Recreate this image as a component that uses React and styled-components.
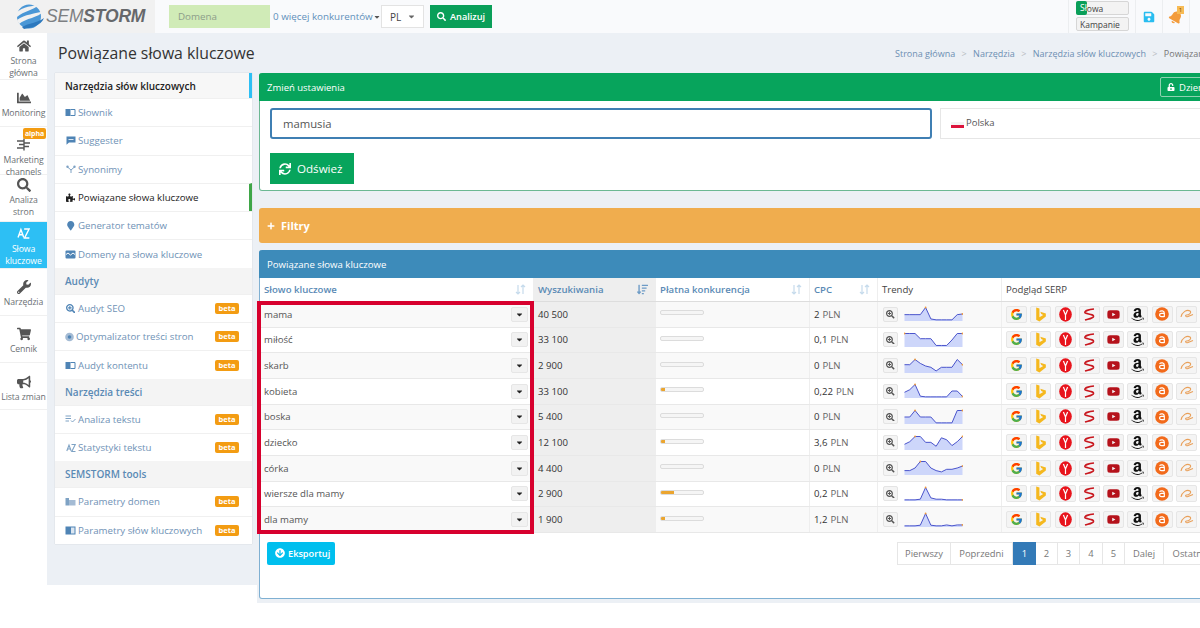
import React from "react";
import styled, { createGlobalStyle } from "styled-components";
import {
  FaHome, FaChartArea, FaSearch, FaWrench, FaShoppingCart, FaBullhorn,
  FaPuzzlePiece, FaSearchPlus, FaSave, FaBell, FaSync, FaUnlockAlt, FaPlus, FaCaretDown,
  FaArrowCircleDown, FaSortAmountDown, FaYoutube, FaAmazon, FaMapMarker,
} from "react-icons/fa";
import { FcGoogle } from "react-icons/fc";

const GlobalStyle = createGlobalStyle`
  html, body { margin: 0; padding: 0; background: #fff; overflow: hidden; }
  body { font-family: "Open Sans", "Liberation Sans", sans-serif; font-size: 10px; color: #444; }
  * { box-sizing: border-box; }
`;

// small drawn icons, the icon packs have nothing close to these
const BookIcon = () => (
  <svg width="11" height="9" viewBox="0 0 11 9">
    <path d="M0.5 1 H5.5 V8 H0.5Z" fill="#4f84b5" />
    <path d="M5.5 1.5 H10 V7.5 H5.5" fill="none" stroke="#4f84b5" strokeWidth="1" />
  </svg>
);

const BubbleIcon = () => (
  <svg width="10" height="9" viewBox="0 0 10 9">
    <path d="M0.5 0.5 H9.5 V6.5 H3 L0.5 8.8Z" fill="#4f84b5" />
    <path d="M2.5 3.5 H7.5" stroke="#fff" strokeWidth="0.8" />
  </svg>
);

const BranchIcon = () => (
  <svg width="10" height="9" viewBox="0 0 10 9">
    <path d="M1.5 2 L5 5 L8.5 2 M5 5 V8" fill="none" stroke="#7ea2c4" strokeWidth="1" />
    <circle cx="1.5" cy="1.8" r="1.2" fill="#7ea2c4" />
    <circle cx="8.5" cy="1.8" r="1.2" fill="#7ea2c4" />
  </svg>
);

const WaveBoxIcon = () => (
  <svg width="11" height="9" viewBox="0 0 11 9">
    <rect x="0.5" y="0.5" width="10" height="8" rx="1" fill="#4f84b5" />
    <path d="M1 4.5 L3 3 L5.5 5 L8 3 L10 4.5" fill="none" stroke="#fff" strokeWidth="1" />
  </svg>
);

const TargetIcon = () => (
  <svg width="10" height="10" viewBox="0 0 10 10">
    <circle cx="5" cy="5" r="4.8" fill="#a4bbd4" />
    <circle cx="5" cy="5" r="2" fill="#4f84b5" />
  </svg>
);

const TextCheckIcon = () => (
  <svg width="11" height="8" viewBox="0 0 11 8">
    <path d="M0.5 1 H6 M0.5 3.5 H6 M0.5 6 H4" stroke="#7ea2c4" strokeWidth="1" />
    <path d="M6 5.5 L7.5 7 L10.5 4" fill="none" stroke="#7ea2c4" strokeWidth="1" />
  </svg>
);

const AzIcon = ({ size = 10, color = "#7ea2c4" }) => (
  <svg width={size} height={size} viewBox="0 0 10 10">
    <path d="M0.8 8 L3 2 L5.2 8 M1.6 6 H4.4" fill="none" stroke={color} strokeWidth="1.1" />
    <path d="M5.5 1.5 H9.3 L5.8 8.5 H9.5" fill="none" stroke={color} strokeWidth="1.1" />
  </svg>
);

const ParamIcon = () => (
  <svg width="11" height="9" viewBox="0 0 11 9">
    <path d="M0.5 1 H4 V8.5 H0.5Z" fill="#7ea2c4" />
    <path d="M4 3 H10.5 V8.5 H4Z" fill="#a4bbd4" />
  </svg>
);

const PanelIcon = () => (
  <svg width="11" height="9" viewBox="0 0 11 9">
    <rect x="0.5" y="0.5" width="10" height="8" fill="#4f84b5" />
    <rect x="6" y="1.5" width="3.5" height="6" fill="#dbe6f1" />
  </svg>
);

const ChannelsIcon = () => (
  <svg width="15" height="13" viewBox="0 0 15 13">
    <path d="M8 0.5 V12.5" stroke="#555" strokeWidth="1.4" />
    <path d="M1 3 H8 M3 6.5 H8 M1 10 H8 M8 5 H14 M8 8.5 H13" stroke="#555" strokeWidth="1.3" />
  </svg>
);

const sideItems = [
  { icon: <FaHome />, label: ["Strona", "główna"], h: 47, pad: 6 },
  { icon: <FaChartArea />, label: ["Monitoring"], h: 47, pad: 11 },
  { icon: <ChannelsIcon />, label: ["Marketing", "channels"], h: 48, pad: 11, alpha: true },
  { icon: <FaSearch />, label: ["Analiza", "stron"], h: 47, pad: 3 },
  { icon: <AzIcon size={13} color="#fff" />, label: ["Słowa", "kluczowe"], h: 47, pad: 5, active: true },
  { icon: <FaWrench />, label: ["Narzędzia"], h: 47, pad: 11 },
  { icon: <FaShoppingCart />, label: ["Cennik"], h: 47, pad: 11 },
  { icon: <FaBullhorn />, label: ["Lista zmian"], h: 47, pad: 12 },
];

const menu = [
  { head: "Narzędzia słów kluczowych", first: true },
  { icon: <BookIcon />, label: "Słownik" },
  { icon: <BubbleIcon />, label: "Suggester" },
  { icon: <BranchIcon />, label: "Synonimy" },
  { icon: <FaPuzzlePiece />, label: "Powiązane słowa kluczowe", current: true },
  { icon: <FaMapMarker />, label: "Generator tematów", blue: true },
  { icon: <WaveBoxIcon />, label: "Domeny na słowa kluczowe" },
  { head: "Audyty" },
  { icon: <FaSearchPlus />, label: "Audyt SEO", beta: true, blue: true },
  { icon: <TargetIcon />, label: "Optymalizator treści stron", beta: true, tight: true },
  { icon: <BookIcon />, label: "Audyt kontentu", beta: true },
  { head: "Narzędzia treści" },
  { icon: <TextCheckIcon />, label: "Analiza tekstu", beta: true },
  { icon: <AzIcon />, label: "Statystyki tekstu", beta: true },
  { head: "SEMSTORM tools" },
  { icon: <ParamIcon />, label: "Parametry domen", beta: true },
  { icon: <PanelIcon />, label: "Parametry słów kluczowych", beta: true },
];

const rows = [
  { word: "mama", vol: "40 500", paid: 0, cpc: "2", trend: [.45, .45, .45, .45, 1, .12, .05, .05, .05, .05, .45, .5] },
  { word: "miłość", vol: "33 100", paid: 0, cpc: "0,1", trend: [1, 1, 1, .6, .6, .6, .08, .08, .08, .5, 1, 1] },
  { word: "skarb", vol: "2 900", paid: 0, cpc: "0", trend: [.6, .6, 1, .7, .5, .4, .12, .4, .4, .4, 1, .6] },
  { word: "kobieta", vol: "33 100", paid: 10, cpc: "0,22", trend: [.4, .6, 1, .1, .05, .05, .05, .05, .05, .5, .5, .08] },
  { word: "boska", vol: "5 400", paid: 0, cpc: "0", trend: [.5, .5, 1, .5, .5, .5, .05, .05, .05, .05, 1, 1] },
  { word: "dziecko", vol: "12 100", paid: 10, cpc: "3,6", trend: [.4, .6, 1, 1, .55, .55, .25, .9, .75, .3, .6, 1] },
  { word: "córka", vol: "4 400", paid: 0, cpc: "0", trend: [.3, .3, .5, 1, 1, .5, .3, .2, .4, .4, .5, .65] },
  { word: "wiersze dla mamy", vol: "2 900", paid: 31, cpc: "0,2", trend: [.05, .05, .05, .1, 1, .2, .1, .1, .05, .05, .05, .05] },
  { word: "dla mamy", vol: "1 900", paid: 10, cpc: "1,2", trend: [.05, .05, .05, .1, 1, .1, .05, .05, .12, .05, .12, .12] },
];

const pages = [
  { t: "Pierwszy", w: 54 }, { t: "Poprzedni", w: 62 }, { t: "1", w: 23, on: true }, { t: "2", w: 22 },
  { t: "3", w: 22 }, { t: "4", w: 23 }, { t: "5", w: 22 }, { t: "Dalej", w: 39 }, { t: "Ostatni", w: 50 },
];

const Globe = () => (
  <svg width="30" height="27" viewBox="0 0 30 27">
    <circle cx="14" cy="13.5" r="12" fill="#4a97d6" />
    <path d="M1 10 C8 3 18 3 24 2 C18 7 9 8 2 14Z" fill="#f1f1f1" />
    <path d="M2 17 C10 11 20 11 29 8 C23 15 11 15 4 21Z" fill="#f1f1f1" />
    <path d="M7 24 C14 20 22 20 29 15 C26 23 15 25 9 26Z" fill="#2c78bd" />
  </svg>
);

const Bing = () => (
  <svg width="13" height="15" viewBox="0 0 12 14">
    <path d="M2 0.5 L5 1.5 V9.5 L8.5 7.5 L6.7 6.5 L5.8 4.4 L11 6 V8.8 L5 13.5 L2 11.8Z" fill="#f5b81e" />
  </svg>
);

const Yandex = () => (
  <svg width="13" height="15" viewBox="0 0 13 15">
    <ellipse cx="6.5" cy="7.5" rx="6.3" ry="7.2" fill="#e8141c" />
    <path d="M4.4 3 L6.5 8 L8.6 3 M6.5 8 V13" fill="none" stroke="#fff" strokeWidth="1.2" />
  </svg>
);

const Seznam = () => (
  <svg width="14" height="13" viewBox="0 0 14 13">
    <path d="M12 1 C7 1.5 2 3 3 4.8 C4 6.2 12 6 11.5 8.5 C11 10.5 6 11 3 12" fill="none" stroke="#c8171e" strokeWidth="1.7" />
  </svg>
);

const Allegro = () => (
  <svg width="14" height="14" viewBox="0 0 14 14">
    <circle cx="7" cy="7" r="6.8" fill="#f26a1b" />
    <path d="M4.5 4.6 C6 3.4 9.3 3.6 9.3 6 V10 M9.3 6.4 H6.5 C3.9 6.4 3.9 9.7 6.5 9.7 H9.3" fill="none" stroke="#fff" strokeWidth="1.2" />
  </svg>
);

const Ali = () => (
  <svg width="14" height="10" viewBox="0 0 14 10">
    <path d="M1 8 C2 3 7 0 10 2 C12 3.5 9 6 6.5 6 C5 6 5.5 8.5 8 7.5 L13 5.5" fill="none" stroke="#e9a05a" strokeWidth="1.1" />
  </svg>
);

const SortArrows = () => (
  <svg width="11" height="11" viewBox="0 0 11 11">
    <path d="M3 1 V10 M1 8 L3 10 L5 8 M8 10 V1 M6 3 L8 1 L10 3" fill="none" stroke="currentColor" strokeWidth="1.2" />
  </svg>
);

const Spark = ({ data }) => {
  const pts = data.map((v, i) => [(i / (data.length - 1)) * 58 + 0.5, 14.5 - v * 13]);
  const line = pts.map(p => p.join(",")).join(" ");
  const last = pts[pts.length - 1];
  const peak = pts.reduce((a, b) => (b[1] < a[1] ? b : a));
  return (
    <svg width="59" height="16" viewBox="0 0 59 16">
      <polygon points={`0.5,15 ${line} 58.5,15`} fill="#cdd6fa" />
      <polyline points={line} fill="none" stroke="#4a54cc" strokeWidth="1" />
      <circle cx={peak[0]} cy={peak[1]} r="0.9" fill="#ef9a3c" />
      <circle cx={last[0]} cy={last[1]} r="0.9" fill="#ef9a3c" />
    </svg>
  );
};

export default function App() {
  return (
    <Page>
      <GlobalStyle />
      <TopBar>
        <LogoBox>
          <Globe />
          <LogoText><span>SEM</span><b>STORM</b></LogoText>
        </LogoBox>
        <DomainInput>Domena</DomainInput>
        <CompLink>0 więcej konkurentów<FaCaretDown /></CompLink>
        <LangSelect>PL<FaCaretDown /></LangSelect>
        <AnalyzeBtn><FaSearch />Analizuj</AnalyzeBtn>
        <TopRight>
          <ToggleBox>
            <Toggle><ToggleOn>Sł</ToggleOn>owa</Toggle>
            <Toggle>Kampanie</Toggle>
          </ToggleBox>
          <TopIcon $color="#29bdf0"><FaSave /></TopIcon>
          <TopIcon $color="#f39c3c">
            <TiltBell><FaBell /></TiltBell>
            <BellBadge>1</BellBadge>
          </TopIcon>
        </TopRight>
      </TopBar>

      <Body>
        <Sidebar>
          {sideItems.map(s => (
            <SideItem key={s.label[0]} $active={s.active} $h={s.h} $pad={s.pad}>
              <SideIcon $active={s.active}>{s.icon}</SideIcon>
              {s.label.map(l => <div key={l}>{l}</div>)}
              {s.alpha && <AlphaBadge>alpha</AlphaBadge>}
            </SideItem>
          ))}
        </Sidebar>

        <Main>
          <TitleRow>
            <Title>Powiązane słowa kluczowe</Title>
            <Crumbs>
              <a>Strona główna</a><i>&gt;</i>
              <a>Narzędzia</a><i>&gt;</i>
              <a>Narzędzia słów kluczowych</a><i>&gt;</i>
              <span>Powiązane słowa kluczowe</span>
            </Crumbs>
          </TitleRow>

          <Columns>
            <LeftCol>
              <Menu>
                {menu.map(m => m.head ? (
                  <MenuHead key={m.head} $first={m.first}>{m.head}</MenuHead>
                ) : (
                  <MenuItem key={m.label} $current={m.current}>
                    <MenuIcon $tight={m.tight} $blue={m.blue}>{m.icon}</MenuIcon>
                    <MenuLabel>{m.label}</MenuLabel>
                    {m.beta && <Beta>beta</Beta>}
                  </MenuItem>
                ))}
              </Menu>
            </LeftCol>

            <RightCol>
              <SettingsPanel>
                <GreenHead>
                  Zmień ustawienia
                  <DayBtn><FaUnlockAlt />Dzienne</DayBtn>
                </GreenHead>
                <SettingsBody>
                  <FieldRow>
                    <KeywordInput>mamusia</KeywordInput>
                    <CountryBox><Flag />Polska</CountryBox>
                  </FieldRow>
                  <RefreshBtn><FaSync />Odśwież</RefreshBtn>
                </SettingsBody>
              </SettingsPanel>

              <FilterBar><FaPlus />Filtry</FilterBar>

              <TablePanel>
                <BlueHead>Powiązane słowa kluczowe</BlueHead>
                <TableWrap>
                  <HeadRow>
                    <HeadCell $link>Słowo kluczowe<SortIcon><SortArrows /></SortIcon></HeadCell>
                    <HeadCell $link $sorted>Wyszukiwania<SortIcon $on><FaSortAmountDown /></SortIcon></HeadCell>
                    <HeadCell $link>Płatna konkurencja<SortIcon><SortArrows /></SortIcon></HeadCell>
                    <HeadCell $link>CPC<SortIcon><SortArrows /></SortIcon></HeadCell>
                    <HeadCell>Trendy</HeadCell>
                    <HeadCell>Podgląd SERP</HeadCell>
                  </HeadRow>
                  {rows.map((r, i) => (
                    <Row key={r.word} $odd={i % 2 === 0}>
                      <Cell>
                        <Word>{r.word}</Word>
                        <CaretBtn><FaCaretDown /></CaretBtn>
                      </Cell>
                      <Cell $sorted><Volume>{r.vol}</Volume></Cell>
                      <Cell><Bar><BarFill style={{ width: r.paid + "%" }} /></Bar></Cell>
                      <Cell><Volume>{r.cpc}</Volume><Unit>PLN</Unit></Cell>
                      <Cell>
                        <ZoomBtn><FaSearchPlus /></ZoomBtn>
                        <Spark data={r.trend} />
                      </Cell>
                      <Cell>
                        <SerpList>
                          <SerpBtn><FcGoogle /></SerpBtn>
                          <SerpBtn><Bing /></SerpBtn>
                          <SerpBtn><Yandex /></SerpBtn>
                          <SerpBtn><Seznam /></SerpBtn>
                          <SerpBtn $color="#b5121b"><FaYoutube /></SerpBtn>
                          <SerpBtn $color="#111" $big><FaAmazon /></SerpBtn>
                          <SerpBtn><Allegro /></SerpBtn>
                          <SerpBtn><Ali /></SerpBtn>
                        </SerpList>
                      </Cell>
                    </Row>
                  ))}
                  <Highlight />
                </TableWrap>
                <TableFoot>
                  <ExportBtn><FaArrowCircleDown />Eksportuj</ExportBtn>
                  <Pager>
                    {pages.map(p => <PageCell key={p.t} $on={p.on} $w={p.w}>{p.t}</PageCell>)}
                  </Pager>
                </TableFoot>
              </TablePanel>
            </RightCol>
          </Columns>
        </Main>
      </Body>
    </Page>
  );
}

const Page = styled.div`
  width: 1200px;
  height: 628px;
  overflow: hidden;
`;

const TopBar = styled.div`
  display: flex;
  align-items: center;
  height: 33px;
  background: #f9fafc;
`;

const LogoBox = styled.div`
  display: flex;
  align-items: center;
  gap: 1px;
  width: 155px;
  height: 33px;
  padding-left: 15px;
  background: #f1f1f1;
  margin-right: 14px;
`;

const LogoText = styled.div`
  font-family: "Liberation Sans", sans-serif;
  font-style: italic;
  font-size: 17.5px;
  color: #7d7f82;
  letter-spacing: -0.2px;
  b { color: #66686b; }
`;

const DomainInput = styled.div`
  width: 101px;
  height: 23px;
  line-height: 23px;
  padding-left: 9px;
  background: #d0ebb7;
  color: #8d9d8a;
  font-size: 9.8px;
`;

const CompLink = styled.div`
  display: flex;
  align-items: center;
  margin-left: 3px;
  width: 108px;
  color: #5f90bb;
  font-size: 9.8px;
  white-space: nowrap;
  svg { font-size: 8px; color: #555; }
`;

const LangSelect = styled.div`
  display: flex;
  align-items: center;
  justify-content: space-between;
  width: 43px;
  height: 23px;
  padding: 0 7px 0 8px;
  background: #fff;
  border: 1px solid #e3e3e3;
  font-size: 10px;
  svg { font-size: 9px; color: #666; }
`;

const AnalyzeBtn = styled.div`
  display: flex;
  align-items: center;
  gap: 4px;
  margin-left: 6px;
  width: 62px;
  height: 23px;
  padding-left: 7px;
  background: #0a9f59;
  color: #fff;
  font-size: 9.2px;
  font-weight: 600;
  svg { font-size: 9px; }
`;

const TopRight = styled.div`
  display: flex;
  align-items: stretch;
  height: 33px;
  margin-left: auto;
  padding-right: 10px;
`;

const ToggleBox = styled.div`
  display: flex;
  flex-direction: column;
  gap: 2px;
  width: 68px;
  padding: 1px 0 0 7px;
  border-left: 1px solid #eceef0;
  border-right: 1px solid #eceef0;
`;

const Toggle = styled.div`
  display: flex;
  align-items: center;
  width: 53px;
  height: 14px;
  padding-left: 3px;
  background: #f3f3f3;
  border: 1px solid #d6d6d6;
  border-radius: 2px;
  font-size: 8.5px;
  color: #444;
`;

const ToggleOn = styled.span`
  height: 14px;
  margin: 0 0 0 -4px;
  padding-left: 4px;
  line-height: 14px;
  background: #0a9f59;
  color: #fff;
  border-radius: 2px;
`;

const TopIcon = styled.div`
  position: relative;
  display: flex;
  align-items: center;
  justify-content: center;
  width: 27px;
  border-right: 1px solid #eceef0;
  color: ${p => p.$color};
  font-size: 12px;
`;

const TiltBell = styled.span`
  display: flex;
  font-size: 14px;
  transform: rotate(30deg);
`;

const BellBadge = styled.span`
  position: absolute;
  top: 6px;
  right: 5px;
  width: 7px;
  height: 8px;
  background: #f7bb55;
  color: #7a4a00;
  font-size: 6px;
  line-height: 8px;
  text-align: center;
`;

const Body = styled.div`
  display: flex;
  align-items: flex-start;
  height: 595px;
`;

const Sidebar = styled.div`
  flex: 0 0 47px;
  background: #fff;
`;

const SideItem = styled.div`
  position: relative;
  height: ${p => p.$h}px;
  padding-top: ${p => p.$pad}px;
  text-align: center;
  font-size: 8.7px;
  line-height: 12px;
  white-space: nowrap;
  letter-spacing: -0.1px;
  color: ${p => (p.$active ? "#fff" : "#6b6f74")};
  background: ${p => (p.$active ? "#2dbff4" : "#fff")};
  border-bottom: 1px solid #f0f0f0;
`;

const SideIcon = styled.div`
  display: flex;
  justify-content: center;
  height: 16px;
  font-size: 14px;
  color: ${p => (p.$active ? "#fff" : "#555")};
`;

const AlphaBadge = styled.span`
  position: absolute;
  top: 1px;
  right: 1px;
  width: 23px;
  height: 11px;
  border-radius: 2px;
  background: #f39c12;
  color: #fff;
  font-size: 7px;
  font-weight: 700;
  line-height: 11px;
`;

const Main = styled.div`
  flex: 1;
  min-width: 0;
  overflow: hidden;
`;

const TitleRow = styled.div`
  display: flex;
  align-items: center;
  height: 40px;
  background: #ecf0f5;
  white-space: nowrap;
`;

const Title = styled.h1`
  flex: 0 0 848px;
  margin: 0;
  padding: 0 0 1px 11px;
  font-size: 15.8px;
  font-weight: 400;
  color: #333;
`;

const Crumbs = styled.div`
  display: flex;
  font-size: 9px;
  padding-top: 1px;
  a { color: #6d8fb3; }
  i { font-style: normal; color: #b8bcc2; margin: 0 6.4px; }
  span { color: #777; }
`;

const Columns = styled.div`
  display: flex;
  align-items: flex-start;
`;

const LeftCol = styled.div`
  flex: 0 0 210px;
  height: 512px;
  padding-left: 8px;
  background: #ecf0f5;
`;

const Menu = styled.div`
  width: 197px;
  background: #fff;
  box-shadow: 0 0 1px rgba(0, 0, 0, 0.2);
`;

const MenuHead = styled.div`
  display: flex;
  align-items: center;
  height: ${p => (p.$first ? 25 : 26)}px;
  padding-left: 10px;
  background: ${p => (p.$first ? "#f7f7f7" : "#f4f4f4")};
  color: ${p => (p.$first ? "#222" : "#5a8ab5")};
  font-size: 10px;
  font-weight: 600;
  border-right: ${p => (p.$first ? "3px solid #2dbff4" : "0")};
`;

const MenuItem = styled.div`
  display: flex;
  align-items: center;
  height: 28.3px;
  padding: 0 13px 0 10px;
  border-top: 1px solid #f0f0f0;
  border-right: ${p => (p.$current ? "3px solid #3fa648" : "0")};
  color: ${p => (p.$current ? "#222" : "#6f92b6")};
  font-size: 9.7px;
  white-space: nowrap;
`;

const MenuIcon = styled.span`
  display: flex;
  justify-content: center;
  width: ${p => (p.$tight ? 9 : 11)}px;
  margin-right: 2px;
  color: ${p => (p.$blue ? "#4f84b5" : "inherit")};
  font-size: 9.5px;
`;

const MenuLabel = styled.span`
  flex: 1;
`;

const Beta = styled.span`
  width: 24px;
  height: 11px;
  border-radius: 2px;
  background: #f39c12;
  color: #fff;
  font-size: 7.5px;
  font-weight: 700;
  line-height: 11px;
  text-align: center;
`;

const RightCol = styled.div`
  flex: 0 0 970px;
  height: 530px;
  padding-left: 2px;
  background: #ecf0f5;
`;

const SettingsPanel = styled.div`
  height: 118px;
  background: #fff;
  border: 1px solid #6cb893;
  border-top: 0;
  border-radius: 3px;
`;

const GreenHead = styled.div`
  position: relative;
  display: flex;
  align-items: center;
  height: 28px;
  margin: 0 -1px;
  padding-left: 8px;
  background: #07a45c;
  color: #fff;
  font-size: 9.5px;
  font-weight: 500;
  border-radius: 3px 3px 0 0;
`;

const DayBtn = styled.div`
  display: flex;
  align-items: center;
  gap: 4px;
  position: absolute;
  left: 901px;
  top: 4px;
  height: 20px;
  padding: 0 8px 0 6px;
  border: 1px solid #8ed2b0;
  border-radius: 2px;
  font-size: 9.5px;
  white-space: nowrap;
  svg { font-size: 8px; }
`;

const SettingsBody = styled.div`
  padding: 7px 10px;
`;

const FieldRow = styled.div`
  display: flex;
  gap: 8px;
`;

const KeywordInput = styled.div`
  width: 662px;
  height: 31px;
  line-height: 28px;
  padding-left: 11px;
  border: 2px solid #3f7fb3;
  border-radius: 3px;
  color: #555;
  font-size: 11.3px;
`;

const CountryBox = styled.div`
  display: flex;
  align-items: center;
  gap: 2px;
  flex: 1;
  height: 31px;
  padding: 0 0 2px 10px;
  border: 1px solid #e6e6e6;
  font-size: 9.5px;
  color: #555;
`;

const Flag = styled.span`
  width: 13px;
  height: 6px;
  margin-top: 4px;
  background: linear-gradient(#f3f3f3 50%, #dc143c 50%);
`;

const RefreshBtn = styled.div`
  display: flex;
  align-items: center;
  gap: 6px;
  width: 84px;
  height: 31px;
  margin-top: 14px;
  padding-left: 9px;
  background: #07a45c;
  color: #fff;
  font-size: 11.6px;
  svg { font-size: 12px; }
`;

const FilterBar = styled.div`
  display: flex;
  align-items: center;
  gap: 6px;
  height: 35px;
  margin-top: 17px;
  padding-left: 8px;
  background: #f0ad4e;
  color: #fff;
  border-radius: 3px;
  font-size: 11px;
  font-weight: 700;
  svg { font-size: 8px; }
`;

const TablePanel = styled.div`
  height: 349px;
  margin-top: 7px;
  background: #fff;
  border: 1px solid #7fb0d2;
  border-top: 0;
  border-radius: 3px;
`;

const BlueHead = styled.div`
  display: flex;
  align-items: center;
  height: 28px;
  margin: 0 -1px;
  padding-left: 8px;
  background: #3d8bba;
  color: #fff;
  font-size: 9.6px;
  border-radius: 3px 3px 0 0;
`;

const TableWrap = styled.div`
  position: relative;
`;

const tableCols = "274px 122px 154px 68px 124px 1fr";

const HeadRow = styled.div`
  display: grid;
  grid-template-columns: ${tableCols};
  height: 24px;
  border-bottom: 1px solid #ddd;
`;

const HeadCell = styled.div`
  display: flex;
  align-items: center;
  justify-content: space-between;
  padding: 0 7px 0 4px;
  background: ${p => (p.$sorted ? "#eee" : "#fff")};
  border-right: 1px solid #eee;
  color: ${p => (p.$link ? "#5a8ab5" : "#444")};
  font-size: 9.6px;
  font-weight: ${p => (p.$link ? 600 : 500)};
  white-space: nowrap;
`;

const SortIcon = styled.span`
  display: flex;
  color: ${p => (p.$on ? "#6d9bc6" : "#c6dbec")};
  font-size: 11px;
`;

const Row = styled.div`
  display: grid;
  grid-template-columns: ${tableCols};
  height: 25.67px;
  background: ${p => (p.$odd ? "#f9f9f9" : "#fff")};
  border-bottom: 1px solid #e8e8e8;
`;

const Cell = styled.div`
  display: flex;
  align-items: center;
  padding: 0 4px;
  background: ${p => (p.$sorted ? "#eee" : "transparent")};
  border-right: 1px solid #eee;
  font-size: 9.6px;
  white-space: nowrap;
  min-width: 0;
`;

const Word = styled.span`
  flex: 1;
  color: #555;
`;

const CaretBtn = styled.span`
  display: flex;
  align-items: center;
  justify-content: center;
  width: 17px;
  height: 15px;
  margin-right: 1px;
  background: #f2f2f2;
  border: 1px solid #e6e6e6;
  border-radius: 2px;
  color: #222;
  font-size: 9px;
`;

const Volume = styled.span`
  color: #333;
`;

const Unit = styled.span`
  margin-left: 3px;
  color: #666;
`;

const Bar = styled.div`
  width: 44px;
  height: 5px;
  margin-bottom: 3px;
  background: #f5f5f5;
  border: 1px solid #dcdcdc;
  border-radius: 2px;
  overflow: hidden;
`;

const BarFill = styled.div`
  height: 100%;
  background: #eba52f;
`;

const ZoomBtn = styled.span`
  display: flex;
  align-items: center;
  justify-content: center;
  flex: 0 0 15px;
  height: 15px;
  margin: 0 6px 0 1px;
  background: #f4f4f4;
  border: 1px solid #e4e4e4;
  border-radius: 2px;
  color: #555;
  font-size: 8.5px;
`;

const SerpList = styled.div`
  display: flex;
  gap: 3.3px;
`;

const SerpBtn = styled.span`
  display: flex;
  align-items: center;
  justify-content: center;
  flex: 0 0 21px;
  height: 17px;
  background: #f4f4f4;
  border: 1px solid #e6e6e6;
  border-radius: 2px;
  color: ${p => p.$color || "#333"};
  font-size: ${p => (p.$big ? 15 : 13)}px;
`;

const Highlight = styled.div`
  position: absolute;
  left: -3px;
  top: 23px;
  width: 277px;
  height: 233px;
  border: 4px solid #d7002e;
  pointer-events: none;
`;

const TableFoot = styled.div`
  display: flex;
  justify-content: space-between;
  align-items: flex-start;
  padding: 9px 0 0 7px;
`;

const ExportBtn = styled.div`
  display: flex;
  align-items: center;
  gap: 3px;
  width: 68px;
  height: 23px;
  padding-left: 8px;
  background: #00bfee;
  border-radius: 2px;
  color: #fff;
  font-size: 9.2px;
  font-weight: 600;
  svg { font-size: 10px; }
`;

const Pager = styled.div`
  display: flex;
  margin-right: 12px;
`;

const PageCell = styled.div`
  flex: 0 0 ${p => p.$w}px;
  height: 23px;
  line-height: 22px;
  text-align: center;
  background: ${p => (p.$on ? "#337ab7" : "#fff")};
  border: 1px solid ${p => (p.$on ? "#337ab7" : "#e6e6e6")};
  border-left-width: ${p => (p.$on ? 1 : 0)}px;
  color: ${p => (p.$on ? "#fff" : "#777")};
  font-size: 9.4px;
  &:first-child { border-left-width: 1px; }
`;
